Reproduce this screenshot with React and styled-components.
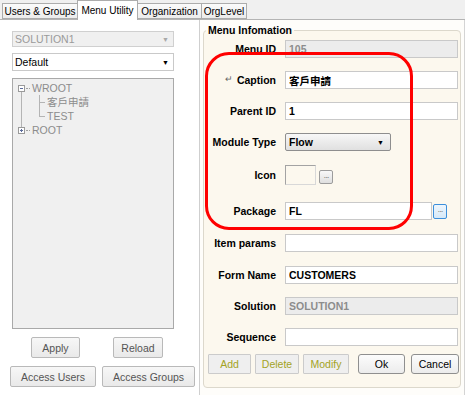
import React from "react";
import styled, { createGlobalStyle } from "styled-components";

const GlobalStyle = createGlobalStyle`
  html, body {
    margin: 0;
    padding: 0;
    background: #ffffff;
  }
  body {
    font-family: "Liberation Sans", Arial, "Noto Sans CJK TC", sans-serif;
  }
  * {
    box-sizing: border-box;
  }
`;

const tabs = [
  { name: "Users & Groups", width: 76 },
  { name: "Menu Utility", width: 61, active: true },
  { name: "Organization", width: 65 },
  { name: "OrgLevel", width: 46 },
];

// 트리 토글 박스
const Toggle = ({ open }) => (
  <svg width="7" height="7" viewBox="0 0 7 7" style={{ flexShrink: 0 }}>
    <rect x="0.5" y="0.5" width="6" height="6" fill="#fff" stroke="#9a9a9a" />
    <line x1="2" y1="3.5" x2="5" y2="3.5" stroke="#5a6a9a" />
    {!open && <line x1="3.5" y1="2" x2="3.5" y2="5" stroke="#5a6a9a" />}
  </svg>
);

const App = () => {
  return (
    <>
      <GlobalStyle />
      <Root>
        <TabStrip>
          {tabs.map((tab) => (
            <Tab key={tab.name} $active={tab.active} $width={tab.width}>
              {tab.name}
            </Tab>
          ))}
        </TabStrip>
        <Content>
          <LeftPanel>
            <Combo $disabled>
              <span>SOLUTION1</span>
              <Arrow $disabled>▼</Arrow>
            </Combo>
            <Combo $mt={6} $h={18}>
              <span>Default</span>
              <Arrow>▼</Arrow>
            </Combo>
            <Tree>
              <Node $line>
                <NodeRow>
                  <Toggle open />
                  <Dash />
                  <span>WROOT</span>
                </NodeRow>
                <Children>
                  <Leaf>客戶申請</Leaf>
                  <Leaf $last>TEST</Leaf>
                </Children>
              </Node>
              <Node>
                <NodeRow>
                  <Toggle />
                  <Dash />
                  <span>ROOT</span>
                </NodeRow>
              </Node>
            </Tree>
            <ButtonRow $pl={31} $gap={33} $mt={8}>
              <GrayButton $w={49}>Apply</GrayButton>
              <GrayButton $w={50}>Reload</GrayButton>
            </ButtonRow>
            <ButtonRow $pl={10} $gap={6} $mt={8}>
              <GrayButton $w={86}>Access Users</GrayButton>
              <GrayButton $w={93}>Access Groups</GrayButton>
            </ButtonRow>
          </LeftPanel>
          <RightPanel>
            <InfoBox>
              <Legend>Menu Infomation</Legend>
              <Row $mt={4}>
                <Label>Menu ID</Label>
                <Input $disabled readOnly value="105" />
              </Row>
              <Row>
                <Label>
                  <ReturnMark>↵</ReturnMark>Caption
                </Label>
                <Input readOnly value="客戶申請" />
              </Row>
              <Row>
                <Label>Parent ID</Label>
                <Input readOnly value="1" />
              </Row>
              <Row>
                <Label>Module Type</Label>
                <Select>
                  <span>Flow</span>
                  <SelectArrow>▼</SelectArrow>
                </Select>
              </Row>
              <Row $mt={14} $h={20} $end>
                <Label>Icon</Label>
                <IconBox />
                <DotButton $ml={3}>···</DotButton>
              </Row>
              <Row $mt={17}>
                <Label>Package</Label>
                <Input readOnly value="FL" $w={147} />
                <DotButton $blue $ml={1}>···</DotButton>
              </Row>
              <Row $mt={14}>
                <Label>Item params</Label>
                <Input readOnly value="" />
              </Row>
              <Row $mt={14}>
                <Label>Form Name</Label>
                <Input readOnly value="CUSTOMERS" />
              </Row>
              <Row>
                <Label>Solution</Label>
                <Input $disabled readOnly value="SOLUTION1" />
              </Row>
              <Row>
                <Label>Sequence</Label>
                <Input readOnly value="" />
              </Row>
              <ActionRow>
                <ActionButton $w={43}>Add</ActionButton>
                <ActionButton $w={44}>Delete</ActionButton>
                <ActionButton $w={46}>Modify</ActionButton>
                <ActionButton $w={47} $main $ml={5}>
                  Ok
                </ActionButton>
                <ActionButton $w={48} $main $ml={2}>
                  Cancel
                </ActionButton>
              </ActionRow>
            </InfoBox>
          </RightPanel>
        </Content>
        <Highlight />
      </Root>
    </>
  );
};

export default App;

const Root = styled.div`
  position: relative;
  width: 465px;
  height: 395px;
  overflow: hidden;
  display: flex;
  flex-direction: column;
  background: #ffffff;
`;

const TabStrip = styled.div`
  height: 20px;
  flex-shrink: 0;
  display: flex;
  align-items: flex-end;
  padding-left: 2px;
  background: #f0f0f0;
  border-bottom: 1px solid #b4b4b4;
`;

const Tab = styled.div`
  width: ${(p) => p.$width}px;
  height: ${(p) => (p.$active ? 20 : 16)}px;
  margin-bottom: ${(p) => (p.$active ? -1 : 0)}px;
  margin-right: -1px;
  display: flex;
  align-items: center;
  justify-content: center;
  font-size: 10px;
  color: #000;
  border: 1px solid #acacac;
  border-bottom: ${(p) => (p.$active ? "none" : "1px solid #acacac")};
  background: ${(p) =>
    p.$active ? "#ffffff" : "linear-gradient(#fbfbfb, #ececec)"};
  position: relative;
  z-index: ${(p) => (p.$active ? 1 : 0)};
`;

const Content = styled.div`
  flex: 1;
  display: flex;
  min-height: 0;
`;

const LeftPanel = styled.div`
  width: 200px;
  flex-shrink: 0;
  border-right: 1px solid #cfcfcf;
  padding-top: 11px;
  display: flex;
  flex-direction: column;
`;

const Combo = styled.div`
  margin: ${(p) => p.$mt || 0}px 0 0 12px;
  width: 162px;
  height: ${(p) => p.$h || 16}px;
  display: flex;
  align-items: center;
  justify-content: space-between;
  padding: 0 4px 0 2px;
  font-size: 10.5px;
  color: ${(p) => (p.$disabled ? "#9a9a9a" : "#000")};
  background: ${(p) => (p.$disabled ? "#f0f0f0" : "#ffffff")};
  border: 1px solid ${(p) => (p.$disabled ? "#d0d0d0" : "#c9c9c9")};
`;

const Arrow = styled.span`
  font-size: 7px;
  color: ${(p) => (p.$disabled ? "#a8a8a8" : "#000")};
`;

const Tree = styled.div`
  margin: 7px 0 0 12px;
  width: 162px;
  height: 251px;
  border: 1px solid #a9a9a9;
  background: #f0f0f0;
  padding: 2px 0 0 5px;
  font-size: 10.5px;
  color: #8c8c8c;
`;

const Node = styled.div`
  position: relative;

  &::before {
    content: "";
    display: ${(p) => (p.$line ? "block" : "none")};
    position: absolute;
    left: 3px;
    top: 11px;
    bottom: -4px;
    border-left: 1px solid #b4b4b4;
  }
`;

const NodeRow = styled.div`
  height: 14px;
  display: flex;
  align-items: center;
`;

const Dash = styled.span`
  width: 4px;
  margin: 0 2px 0 1px;
  border-top: 1px dotted #a0a0a0;
`;

const Children = styled.div`
  margin-left: 21px;
`;

const Leaf = styled.div`
  position: relative;
  height: 14px;
  line-height: 14px;
  padding-left: 8px;

  &::before {
    content: "";
    position: absolute;
    left: 0;
    top: 0;
    bottom: ${(p) => (p.$last ? "50%" : "0")};
    border-left: 1px solid #b4b4b4;
  }

  &::after {
    content: "";
    position: absolute;
    left: 0;
    top: 50%;
    width: 6px;
    border-top: 1px solid #b4b4b4;
  }
`;

const ButtonRow = styled.div`
  display: flex;
  gap: ${(p) => p.$gap}px;
  padding-left: ${(p) => p.$pl}px;
  margin-top: ${(p) => p.$mt}px;
`;

const GrayButton = styled.button`
  width: ${(p) => p.$w}px;
  height: 21px;
  padding: 0;
  font-family: inherit;
  font-size: 10.5px;
  color: #555;
  border: 1px solid #b9b9b9;
  border-radius: 2px;
  background: linear-gradient(#f7f7f7, #e9e9e9);
`;

const RightPanel = styled.div`
  width: 265px;
  flex-shrink: 0;
  padding: 10px 4px 7px 3px;
  background: #fefdfa;
  border-right: 1px solid #d4d4d4;
`;

const InfoBox = styled.section`
  width: 258px;
  height: 100%;
  padding: 4px 2px 0 0;
  border: 1px solid #dcd8cc;
  border-radius: 4px;
  background: #fcf8ee;
`;

const Legend = styled.div`
  width: fit-content;
  margin: -11px 0 0 2px;
  padding: 0 2px;
  font-size: 10.5px;
  line-height: 12px;
  font-weight: bold;
  color: #000;
  background: linear-gradient(#fefdfa 50%, #fcf8ee 50%);
`;

const Row = styled.div`
  display: flex;
  align-items: ${(p) => (p.$end ? "flex-end" : "center")};
  height: ${(p) => p.$h || 18}px;
  margin-top: ${(p) => (p.$mt === undefined ? 13 : p.$mt)}px;
`;

const Label = styled.div`
  width: 72px;
  flex-shrink: 0;
  margin-right: 9px;
  align-self: center;
  text-align: right;
  font-size: 10.5px;
  font-weight: bold;
  color: #000;
  white-space: nowrap;
`;

const ReturnMark = styled.span`
  font-size: 9px;
  font-weight: normal;
  color: #666;
  margin-right: 4px;
  vertical-align: 2px;
`;

const Input = styled.input`
  flex: none;
  width: ${(p) => p.$w || 173}px;
  height: 18px;
  padding: 0 3px;
  margin: 0;
  font-family: inherit;
  font-size: 10.5px;
  font-weight: bold;
  color: ${(p) => (p.$disabled ? "#8c8c8c" : "#000")};
  background: ${(p) => (p.$disabled ? "#ececec" : "#ffffff")};
  border: 1px solid #c9c9c9;
  outline: none;
`;

const Select = styled.div`
  width: 106px;
  height: 18px;
  display: flex;
  align-items: center;
  justify-content: space-between;
  padding: 0 6px 0 3px;
  font-size: 10.5px;
  font-weight: bold;
  border: 1px solid #8e8e8e;
  border-radius: 2px;
  background: linear-gradient(#f7f7f7, #e0e0e0);
`;

const SelectArrow = styled.span`
  font-size: 7px;
  color: #000;
`;

const IconBox = styled.div`
  width: 31px;
  height: 20px;
  border: 1px solid #a3a3a3;
  border-right-color: #d8d8d8;
  border-bottom-color: #d8d8d8;
  background: #fcf8ee;
`;

const DotButton = styled.div`
  width: 14px;
  height: ${(p) => (p.$blue ? 15 : 14)}px;
  margin-left: ${(p) => p.$ml}px;
  margin-bottom: ${(p) => (p.$blue ? 0 : 1)}px;
  display: flex;
  align-items: center;
  justify-content: center;
  font-size: 8px;
  letter-spacing: -1px;
  color: #555;
  border: 1px solid ${(p) => (p.$blue ? "#3c8fdc" : "#9c9c9c")};
  border-radius: 2px;
  background: ${(p) =>
    p.$blue
      ? "linear-gradient(#eef6fd, #d6e9f8)"
      : "linear-gradient(#f8f8f8, #dfdfdf)"};
`;

const ActionRow = styled.div`
  display: flex;
  gap: 4px;
  margin-top: 8px;
  padding-left: 4px;
`;

const ActionButton = styled.button`
  width: ${(p) => p.$w}px;
  flex-shrink: 0;
  height: 20px;
  padding: 0;
  margin-left: ${(p) => p.$ml || 0}px;
  font-family: inherit;
  font-size: 10.5px;
  color: ${(p) => (p.$main ? "#000" : "#a3a324")};
  border: 1px solid ${(p) => (p.$main ? "#8f8f8f" : "#cbcbcb")};
  border-radius: ${(p) => (p.$main ? 3 : 1)}px;
  background: ${(p) =>
    p.$main ? "linear-gradient(#fcfcfc, #ececec)" : "#efefef"};
`;

const Highlight = styled.div`
  position: absolute;
  left: 205px;
  top: 52px;
  width: 208px;
  height: 178px;
  border: 3px solid #ff0000;
  border-radius: 24px;
  pointer-events: none;
`;
